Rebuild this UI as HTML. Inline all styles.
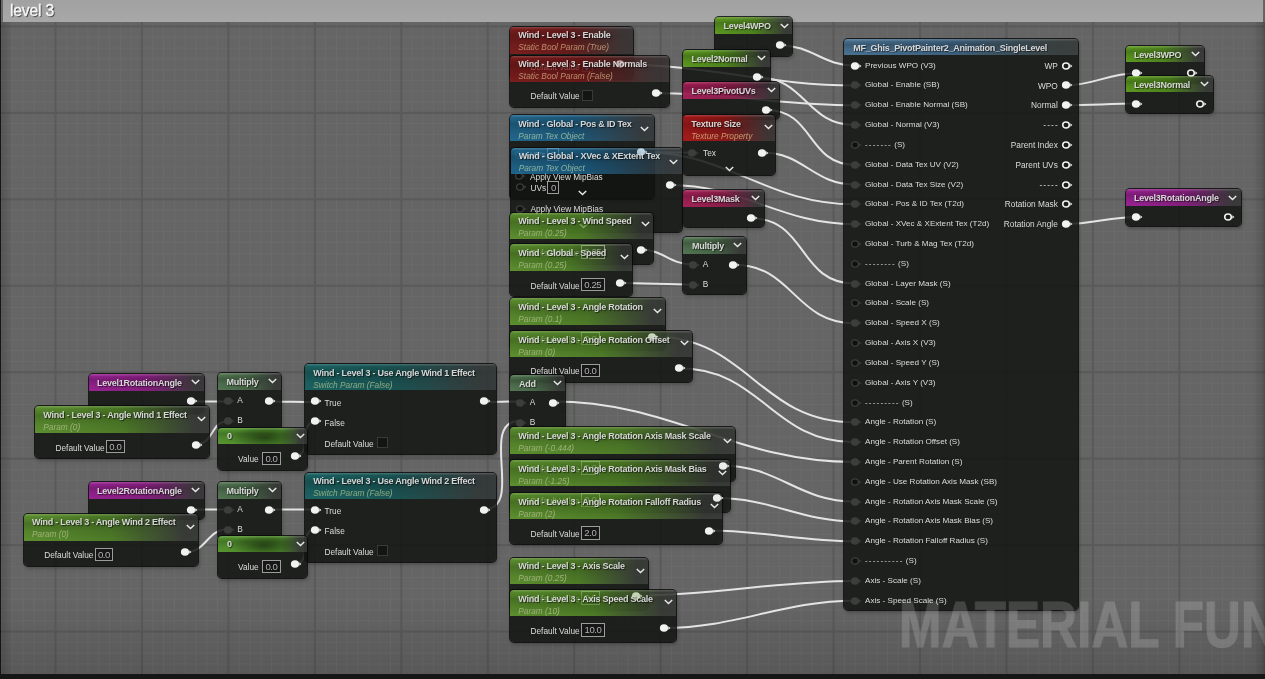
<!DOCTYPE html><html><head><meta charset="utf-8"><style>

*{margin:0;padding:0;box-sizing:border-box}
html,body{width:1265px;height:679px;overflow:hidden;background:#656565}
body{position:relative;font-family:"Liberation Sans",sans-serif}
#bg{position:absolute;left:0;top:0;width:1265px;height:679px;background:#656565}
.grid{position:absolute;left:0;top:0;width:1265px;height:679px}
#cmt{position:absolute;left:3px;top:0;width:1260px;height:22px;background:linear-gradient(180deg,#a1a1a1,#a8a8a8);z-index:2}
#cmtl{position:absolute;left:0;top:0;width:1.3px;height:679px;background:#161616;z-index:2}
#cmtt{position:absolute;left:10.3px;top:1px;font-size:17px;letter-spacing:-0.2px;color:#f6f6f6;text-shadow:1px 1px 1px rgba(20,20,20,.8);-webkit-text-stroke:0.4px #f6f6f6;z-index:3;white-space:nowrap;transform:scaleX(.925);transform-origin:0 0}
#botbar{position:absolute;left:0;top:674px;width:1265px;height:5px;background:#161616;z-index:1000}
#vl{position:absolute;left:1px;top:22px;width:12px;height:652px;background:linear-gradient(90deg,rgba(0,0,0,.16),rgba(0,0,0,0));z-index:4}
#vb{position:absolute;left:0;top:600px;width:1265px;height:74px;background:linear-gradient(180deg,rgba(0,0,0,0),rgba(0,0,0,.12));z-index:4}
#rstrip{position:absolute;left:1252px;top:22px;width:13px;height:652px;background:linear-gradient(90deg,rgba(0,0,0,0),rgba(0,0,0,.1) 70%,rgba(0,0,0,.22));z-index:950}
#wm{position:absolute;left:898.5px;top:587.3px;font-size:65px;font-weight:bold;color:#fff;opacity:.17;-webkit-text-stroke:1.2px #fff;white-space:nowrap;transform:scaleX(.787);transform-origin:0 0;z-index:900;letter-spacing:0}
#wires{position:absolute;left:0;top:0;z-index:5}
#wires path{fill:none;stroke:#e4e4e4;stroke-width:2}
.node{position:absolute;border-radius:4px;box-shadow:0 0 0 1px rgba(8,8,8,.8),1px 2px 4px rgba(0,0,0,.32)}
.nbody{position:absolute;background:rgba(18,20,18,.85);border-radius:4px}
.hdr{position:absolute;border-radius:4px 4px 0 0;overflow:hidden}
.hdr::before{content:"";position:absolute;left:0;top:0;right:0;height:2px;background:linear-gradient(180deg,rgba(255,255,255,.17),rgba(255,255,255,.03))}
.hdr::after{content:"";position:absolute;left:0;top:0;right:0;bottom:0;background:linear-gradient(180deg,rgba(0,0,0,0) 1.5px,rgba(0,0,0,.2) 35%,rgba(0,0,0,.08) 65%,rgba(0,0,0,0) 100%);-webkit-mask-image:linear-gradient(90deg,#000 55%,rgba(0,0,0,0) 100%)}
.t{position:absolute;white-space:nowrap;line-height:1}
.title{font-size:9px;font-weight:bold;letter-spacing:-0.25px;color:#d6d6d6;text-shadow:1px 1px 1px rgba(0,0,0,.6)}
.sub{font-size:8.3px;font-style:italic;color:#9fb27a}
.sub-red{color:#b98f6c}
.sub-texred{color:#c79a6e}
.sub-blue{color:#8db39e}
.sub-teal{color:#8cab80}
.lbl{font-size:8.3px;color:#dcdcdc}
.chev{position:absolute}
.pin{position:absolute}
.box{position:absolute;border:1px solid #9c9c9c;color:#b0b0b0;font-size:9.6px;letter-spacing:-0.45px;line-height:12px;text-align:center;background:rgba(14,14,14,.55)}
.cbx{position:absolute;width:11px;height:11px;background:#141414;border:1px solid #3a3a3a}

</style></head><body>
<div id="bg"></div>
<div id="scene" style="position:absolute;left:0;top:0;width:1265px;height:679px;will-change:transform">
<svg class="grid" width="1265" height="679"><rect x="0.97" y="0" width="1" height="679" fill="#6b6b6b"/><rect x="11.77" y="0" width="1" height="679" fill="#6b6b6b"/><rect x="22.58" y="0" width="1" height="679" fill="#6b6b6b"/><rect x="33.39" y="0" width="1" height="679" fill="#6b6b6b"/><rect x="44.19" y="0" width="1" height="679" fill="#6b6b6b"/><rect x="65.81" y="0" width="1" height="679" fill="#6b6b6b"/><rect x="76.61" y="0" width="1" height="679" fill="#6b6b6b"/><rect x="87.42" y="0" width="1" height="679" fill="#6b6b6b"/><rect x="98.22" y="0" width="1" height="679" fill="#6b6b6b"/><rect x="109.03" y="0" width="1" height="679" fill="#6b6b6b"/><rect x="119.84" y="0" width="1" height="679" fill="#6b6b6b"/><rect x="130.64" y="0" width="1" height="679" fill="#6b6b6b"/><rect x="152.26" y="0" width="1" height="679" fill="#6b6b6b"/><rect x="163.06" y="0" width="1" height="679" fill="#6b6b6b"/><rect x="173.87" y="0" width="1" height="679" fill="#6b6b6b"/><rect x="184.68" y="0" width="1" height="679" fill="#6b6b6b"/><rect x="195.48" y="0" width="1" height="679" fill="#6b6b6b"/><rect x="206.29" y="0" width="1" height="679" fill="#6b6b6b"/><rect x="217.09" y="0" width="1" height="679" fill="#6b6b6b"/><rect x="238.71" y="0" width="1" height="679" fill="#6b6b6b"/><rect x="249.51" y="0" width="1" height="679" fill="#6b6b6b"/><rect x="260.32" y="0" width="1" height="679" fill="#6b6b6b"/><rect x="271.12" y="0" width="1" height="679" fill="#6b6b6b"/><rect x="281.93" y="0" width="1" height="679" fill="#6b6b6b"/><rect x="292.74" y="0" width="1" height="679" fill="#6b6b6b"/><rect x="303.54" y="0" width="1" height="679" fill="#6b6b6b"/><rect x="325.16" y="0" width="1" height="679" fill="#6b6b6b"/><rect x="335.96" y="0" width="1" height="679" fill="#6b6b6b"/><rect x="346.77" y="0" width="1" height="679" fill="#6b6b6b"/><rect x="357.57" y="0" width="1" height="679" fill="#6b6b6b"/><rect x="368.38" y="0" width="1" height="679" fill="#6b6b6b"/><rect x="379.19" y="0" width="1" height="679" fill="#6b6b6b"/><rect x="389.99" y="0" width="1" height="679" fill="#6b6b6b"/><rect x="411.61" y="0" width="1" height="679" fill="#6b6b6b"/><rect x="422.41" y="0" width="1" height="679" fill="#6b6b6b"/><rect x="433.22" y="0" width="1" height="679" fill="#6b6b6b"/><rect x="444.03" y="0" width="1" height="679" fill="#6b6b6b"/><rect x="454.83" y="0" width="1" height="679" fill="#6b6b6b"/><rect x="465.64" y="0" width="1" height="679" fill="#6b6b6b"/><rect x="476.44" y="0" width="1" height="679" fill="#6b6b6b"/><rect x="498.06" y="0" width="1" height="679" fill="#6b6b6b"/><rect x="508.86" y="0" width="1" height="679" fill="#6b6b6b"/><rect x="519.67" y="0" width="1" height="679" fill="#6b6b6b"/><rect x="530.48" y="0" width="1" height="679" fill="#6b6b6b"/><rect x="541.28" y="0" width="1" height="679" fill="#6b6b6b"/><rect x="552.09" y="0" width="1" height="679" fill="#6b6b6b"/><rect x="562.89" y="0" width="1" height="679" fill="#6b6b6b"/><rect x="584.51" y="0" width="1" height="679" fill="#6b6b6b"/><rect x="595.31" y="0" width="1" height="679" fill="#6b6b6b"/><rect x="606.12" y="0" width="1" height="679" fill="#6b6b6b"/><rect x="616.93" y="0" width="1" height="679" fill="#6b6b6b"/><rect x="627.73" y="0" width="1" height="679" fill="#6b6b6b"/><rect x="638.54" y="0" width="1" height="679" fill="#6b6b6b"/><rect x="649.34" y="0" width="1" height="679" fill="#6b6b6b"/><rect x="670.96" y="0" width="1" height="679" fill="#6b6b6b"/><rect x="681.76" y="0" width="1" height="679" fill="#6b6b6b"/><rect x="692.57" y="0" width="1" height="679" fill="#6b6b6b"/><rect x="703.38" y="0" width="1" height="679" fill="#6b6b6b"/><rect x="714.18" y="0" width="1" height="679" fill="#6b6b6b"/><rect x="724.99" y="0" width="1" height="679" fill="#6b6b6b"/><rect x="735.79" y="0" width="1" height="679" fill="#6b6b6b"/><rect x="757.41" y="0" width="1" height="679" fill="#6b6b6b"/><rect x="768.21" y="0" width="1" height="679" fill="#6b6b6b"/><rect x="779.02" y="0" width="1" height="679" fill="#6b6b6b"/><rect x="789.83" y="0" width="1" height="679" fill="#6b6b6b"/><rect x="800.63" y="0" width="1" height="679" fill="#6b6b6b"/><rect x="811.44" y="0" width="1" height="679" fill="#6b6b6b"/><rect x="822.24" y="0" width="1" height="679" fill="#6b6b6b"/><rect x="843.86" y="0" width="1" height="679" fill="#6b6b6b"/><rect x="854.66" y="0" width="1" height="679" fill="#6b6b6b"/><rect x="865.47" y="0" width="1" height="679" fill="#6b6b6b"/><rect x="876.27" y="0" width="1" height="679" fill="#6b6b6b"/><rect x="887.08" y="0" width="1" height="679" fill="#6b6b6b"/><rect x="897.89" y="0" width="1" height="679" fill="#6b6b6b"/><rect x="908.69" y="0" width="1" height="679" fill="#6b6b6b"/><rect x="930.31" y="0" width="1" height="679" fill="#6b6b6b"/><rect x="941.11" y="0" width="1" height="679" fill="#6b6b6b"/><rect x="951.92" y="0" width="1" height="679" fill="#6b6b6b"/><rect x="962.73" y="0" width="1" height="679" fill="#6b6b6b"/><rect x="973.53" y="0" width="1" height="679" fill="#6b6b6b"/><rect x="984.34" y="0" width="1" height="679" fill="#6b6b6b"/><rect x="995.14" y="0" width="1" height="679" fill="#6b6b6b"/><rect x="1016.76" y="0" width="1" height="679" fill="#6b6b6b"/><rect x="1027.56" y="0" width="1" height="679" fill="#6b6b6b"/><rect x="1038.37" y="0" width="1" height="679" fill="#6b6b6b"/><rect x="1049.18" y="0" width="1" height="679" fill="#6b6b6b"/><rect x="1059.98" y="0" width="1" height="679" fill="#6b6b6b"/><rect x="1070.79" y="0" width="1" height="679" fill="#6b6b6b"/><rect x="1081.59" y="0" width="1" height="679" fill="#6b6b6b"/><rect x="1103.21" y="0" width="1" height="679" fill="#6b6b6b"/><rect x="1114.01" y="0" width="1" height="679" fill="#6b6b6b"/><rect x="1124.82" y="0" width="1" height="679" fill="#6b6b6b"/><rect x="1135.62" y="0" width="1" height="679" fill="#6b6b6b"/><rect x="1146.43" y="0" width="1" height="679" fill="#6b6b6b"/><rect x="1157.24" y="0" width="1" height="679" fill="#6b6b6b"/><rect x="1168.04" y="0" width="1" height="679" fill="#6b6b6b"/><rect x="1189.66" y="0" width="1" height="679" fill="#6b6b6b"/><rect x="1200.46" y="0" width="1" height="679" fill="#6b6b6b"/><rect x="1211.27" y="0" width="1" height="679" fill="#6b6b6b"/><rect x="1222.08" y="0" width="1" height="679" fill="#6b6b6b"/><rect x="1232.88" y="0" width="1" height="679" fill="#6b6b6b"/><rect x="1243.69" y="0" width="1" height="679" fill="#6b6b6b"/><rect x="1254.49" y="0" width="1" height="679" fill="#6b6b6b"/><rect x="0" y="4.29" width="1265" height="1" fill="#6b6b6b"/><rect x="0" y="15.09" width="1265" height="1" fill="#6b6b6b"/><rect x="0" y="36.71" width="1265" height="1" fill="#6b6b6b"/><rect x="0" y="47.51" width="1265" height="1" fill="#6b6b6b"/><rect x="0" y="58.32" width="1265" height="1" fill="#6b6b6b"/><rect x="0" y="69.12" width="1265" height="1" fill="#6b6b6b"/><rect x="0" y="79.93" width="1265" height="1" fill="#6b6b6b"/><rect x="0" y="90.74" width="1265" height="1" fill="#6b6b6b"/><rect x="0" y="101.54" width="1265" height="1" fill="#6b6b6b"/><rect x="0" y="123.16" width="1265" height="1" fill="#6b6b6b"/><rect x="0" y="133.96" width="1265" height="1" fill="#6b6b6b"/><rect x="0" y="144.77" width="1265" height="1" fill="#6b6b6b"/><rect x="0" y="155.58" width="1265" height="1" fill="#6b6b6b"/><rect x="0" y="166.38" width="1265" height="1" fill="#6b6b6b"/><rect x="0" y="177.19" width="1265" height="1" fill="#6b6b6b"/><rect x="0" y="187.99" width="1265" height="1" fill="#6b6b6b"/><rect x="0" y="209.61" width="1265" height="1" fill="#6b6b6b"/><rect x="0" y="220.41" width="1265" height="1" fill="#6b6b6b"/><rect x="0" y="231.22" width="1265" height="1" fill="#6b6b6b"/><rect x="0" y="242.03" width="1265" height="1" fill="#6b6b6b"/><rect x="0" y="252.83" width="1265" height="1" fill="#6b6b6b"/><rect x="0" y="263.64" width="1265" height="1" fill="#6b6b6b"/><rect x="0" y="274.44" width="1265" height="1" fill="#6b6b6b"/><rect x="0" y="296.06" width="1265" height="1" fill="#6b6b6b"/><rect x="0" y="306.86" width="1265" height="1" fill="#6b6b6b"/><rect x="0" y="317.67" width="1265" height="1" fill="#6b6b6b"/><rect x="0" y="328.47" width="1265" height="1" fill="#6b6b6b"/><rect x="0" y="339.28" width="1265" height="1" fill="#6b6b6b"/><rect x="0" y="350.09" width="1265" height="1" fill="#6b6b6b"/><rect x="0" y="360.89" width="1265" height="1" fill="#6b6b6b"/><rect x="0" y="382.51" width="1265" height="1" fill="#6b6b6b"/><rect x="0" y="393.31" width="1265" height="1" fill="#6b6b6b"/><rect x="0" y="404.12" width="1265" height="1" fill="#6b6b6b"/><rect x="0" y="414.93" width="1265" height="1" fill="#6b6b6b"/><rect x="0" y="425.73" width="1265" height="1" fill="#6b6b6b"/><rect x="0" y="436.54" width="1265" height="1" fill="#6b6b6b"/><rect x="0" y="447.34" width="1265" height="1" fill="#6b6b6b"/><rect x="0" y="468.96" width="1265" height="1" fill="#6b6b6b"/><rect x="0" y="479.76" width="1265" height="1" fill="#6b6b6b"/><rect x="0" y="490.57" width="1265" height="1" fill="#6b6b6b"/><rect x="0" y="501.38" width="1265" height="1" fill="#6b6b6b"/><rect x="0" y="512.18" width="1265" height="1" fill="#6b6b6b"/><rect x="0" y="522.99" width="1265" height="1" fill="#6b6b6b"/><rect x="0" y="533.79" width="1265" height="1" fill="#6b6b6b"/><rect x="0" y="555.41" width="1265" height="1" fill="#6b6b6b"/><rect x="0" y="566.21" width="1265" height="1" fill="#6b6b6b"/><rect x="0" y="577.02" width="1265" height="1" fill="#6b6b6b"/><rect x="0" y="587.83" width="1265" height="1" fill="#6b6b6b"/><rect x="0" y="598.63" width="1265" height="1" fill="#6b6b6b"/><rect x="0" y="609.44" width="1265" height="1" fill="#6b6b6b"/><rect x="0" y="620.24" width="1265" height="1" fill="#6b6b6b"/><rect x="0" y="641.86" width="1265" height="1" fill="#6b6b6b"/><rect x="0" y="652.66" width="1265" height="1" fill="#6b6b6b"/><rect x="0" y="663.47" width="1265" height="1" fill="#6b6b6b"/><rect x="0" y="674.27" width="1265" height="1" fill="#6b6b6b"/><rect x="54.5" y="0" width="2" height="679" fill="#5a5a5a"/><rect x="140.95" y="0" width="2" height="679" fill="#5a5a5a"/><rect x="227.4" y="0" width="2" height="679" fill="#5a5a5a"/><rect x="313.85" y="0" width="2" height="679" fill="#5a5a5a"/><rect x="400.3" y="0" width="2" height="679" fill="#5a5a5a"/><rect x="486.75" y="0" width="2" height="679" fill="#5a5a5a"/><rect x="573.2" y="0" width="2" height="679" fill="#5a5a5a"/><rect x="659.65" y="0" width="2" height="679" fill="#5a5a5a"/><rect x="746.1" y="0" width="2" height="679" fill="#5a5a5a"/><rect x="832.55" y="0" width="2" height="679" fill="#5a5a5a"/><rect x="919" y="0" width="2" height="679" fill="#5a5a5a"/><rect x="1005.45" y="0" width="2" height="679" fill="#5a5a5a"/><rect x="1091.9" y="0" width="2" height="679" fill="#5a5a5a"/><rect x="1178.35" y="0" width="2" height="679" fill="#5a5a5a"/><rect x="1264.8" y="0" width="2" height="679" fill="#5a5a5a"/><rect x="0" y="25.4" width="1265" height="2" fill="#5a5a5a"/><rect x="0" y="111.85" width="1265" height="2" fill="#5a5a5a"/><rect x="0" y="198.3" width="1265" height="2" fill="#5a5a5a"/><rect x="0" y="284.75" width="1265" height="2" fill="#5a5a5a"/><rect x="0" y="371.2" width="1265" height="2" fill="#5a5a5a"/><rect x="0" y="457.65" width="1265" height="2" fill="#5a5a5a"/><rect x="0" y="544.1" width="1265" height="2" fill="#5a5a5a"/><rect x="0" y="630.55" width="1265" height="2" fill="#5a5a5a"/></svg>
<div id="cmt"></div><div id="cmtl"></div><div id="cmtt">level 3</div>
<div id="wm">MATERIAL FUNCTION</div>
<svg id="wires" width="1265" height="679"><path d="M190.7 401.5 C203.27 401.5 215.83 401.5 228.4 401.5"/><path d="M195.9 444.2 C214.4 444.2 209.9 421.2 228.4 421.2"/><path d="M268.6 401.5 C284.33 401.5 299.57 402 315.3 402"/><path d="M295.3 455.6 C313.17 455.6 297.43 422 315.3 422"/><path d="M190.5 509.5 C203.13 509.5 215.77 509.5 228.4 509.5"/><path d="M185 552.2 C207.13 552.2 206.27 529.2 228.4 529.2"/><path d="M268.6 509.5 C284.2 509.5 299.7 509.6 315.3 509.6"/><path d="M295.3 563.6 C313.3 563.6 297.3 529.6 315.3 529.6"/><path d="M483.7 402 C495.8 402 507.4 401.5 519.5 401.5"/><path d="M483.7 509.6 C525.17 509.6 478.03 421 519.5 421"/><path d="M552.5 401.5 C673.37 401.5 733.73 462 854.6 462"/><path d="M780.5 45.4 C811.93 45.4 823.17 65.6 854.6 65.6"/><path d="M620 64.5 C705.17 64.5 769.43 85.42 854.6 85.42"/><path d="M656 93.3 C726.18 93.3 784.42 105.24 854.6 105.24"/><path d="M757.3 77.4 C805.62 77.4 806.28 125.06 854.6 125.06"/><path d="M766.6 110 C814.17 110 807.03 164.7 854.6 164.7"/><path d="M762.3 152.5 C803.74 152.5 813.16 184.52 854.6 184.52"/><path d="M641 152 C658.3 152 675.1 152.5 692.4 152.5"/><path d="M641 152 C729.65 152 765.95 204.34 854.6 204.34"/><path d="M669.7 185 C744.39 185 779.91 224.16 854.6 224.16"/><path d="M751 218.3 C807.31 218.3 798.29 283.62 854.6 283.62"/><path d="M733 264.5 C793.12 264.5 794.48 323.26 854.6 323.26"/><path d="M641 249.6 C663.1 249.6 670.3 264.5 692.4 264.5"/><path d="M620 283 C644.63 283 667.77 284.5 692.4 284.5"/><path d="M652.5 336.5 C748.49 336.5 758.61 422.36 854.6 422.36"/><path d="M678.8 368.3 C762.03 368.3 771.37 442.18 854.6 442.18"/><path d="M722 465.4 C778.28 465.4 798.32 501.64 854.6 501.64"/><path d="M717 498 C770.69 498 800.91 521.46 854.6 521.46"/><path d="M709 530.6 C761.09 530.6 802.51 541.28 854.6 541.28"/><path d="M636 595.5 C713.73 595.5 776.87 580.92 854.6 580.92"/><path d="M664 628 C736.62 628 781.98 600.74 854.6 600.74"/><path d="M1065.6 85.42 C1093.11 85.42 1108.49 73.3 1136 73.3"/><path d="M1065.6 105.24 C1089.61 105.24 1111.99 103.6 1136 103.6"/><path d="M1065.6 224.16 C1091.45 224.16 1110.15 217 1136 217"/></svg>
<div class="node" style="left:88.5px;top:374.1px;width:115.4px;height:38.7px;z-index:101"></div><div class="nbody" style="left:88.5px;top:374.1px;width:115.4px;height:38.7px;z-index:101"></div><div class="hdr" style="left:88.5px;top:374.1px;width:115.4px;height:16.9px;background:linear-gradient(90deg,rgba(202,37,194,0.72) 0%,rgba(181,32,171,0.68) 52%,rgba(224,200,224,0.15) 92%,rgba(224,200,224,0.15) 100%);z-index:301"></div><div class="t title" style="left:96.9px;top:379.18px;z-index:501">Level1RotationAngle</div><svg class="chev" style="left:191.4px;top:379.3px;z-index:501" width="9" height="6"><path d="M0.8 1 L4.5 4.5 L8.2 1" fill="none" stroke="#e8e8e8" stroke-width="1.45"/></svg><svg class="pin" style="left:186.2px;top:396.4px;z-index:201" width="14" height="10"><ellipse cx="5" cy="5" rx="4.10" ry="3.80" fill="#f2f2f2" stroke="none" stroke-width="0"/><path d="M9.3 3.3 L11.4 5 L9.3 6.7 Z" fill="#f2f2f2"/></svg><div class="node" style="left:35.1px;top:406.1px;width:173.7px;height:52.2px;z-index:102"></div><div class="nbody" style="left:35.1px;top:406.1px;width:173.7px;height:52.2px;z-index:102"></div><div class="hdr" style="left:35.1px;top:406.1px;width:173.7px;height:26.9px;background:linear-gradient(90deg,rgba(117,187,55,0.72) 0%,rgba(102,168,46,0.68) 50%,rgba(211,220,204,0.15) 92%,rgba(211,220,204,0.15) 100%);z-index:302"></div><div class="t title" style="left:43.3px;top:410.58px;z-index:502">Wind - Level 3 - Angle Wind 1 Effect</div><div class="t sub sub-green" style="left:43.3px;top:422.53px;z-index:502">Param (0)</div><svg class="chev" style="left:196.8px;top:416px;z-index:502" width="9" height="6"><path d="M0.8 1 L4.5 4.5 L8.2 1" fill="none" stroke="#e8e8e8" stroke-width="1.45"/></svg><div class="t lbl" style="left:55.5px;top:443.53px;z-index:202">Default Value</div><div class="box" style="left:106px;top:439.9px;width:18.6px;height:13.6px;z-index:202">0.0</div><svg class="pin" style="left:191.1px;top:439.5px;z-index:202" width="14" height="10"><ellipse cx="5" cy="5" rx="4.10" ry="3.80" fill="#f2f2f2" stroke="none" stroke-width="0"/><path d="M9.3 3.3 L11.4 5 L9.3 6.7 Z" fill="#f2f2f2"/></svg><div class="node" style="left:217.6px;top:373.1px;width:63.3px;height:57.2px;z-index:103"></div><div class="nbody" style="left:217.6px;top:373.1px;width:63.3px;height:57.2px;z-index:103"></div><div class="hdr" style="left:217.6px;top:373.1px;width:63.3px;height:16.9px;background:linear-gradient(90deg,rgba(106,152,106,0.72) 0%,rgba(94,140,94,0.68) 45%,rgba(211,220,211,0.15) 92%,rgba(211,220,211,0.15) 100%);z-index:303"></div><div class="t title" style="left:226.5px;top:378.18px;z-index:503">Multiply</div><svg class="chev" style="left:268.3px;top:378.2px;z-index:503" width="9" height="6"><path d="M0.8 1 L4.5 4.5 L8.2 1" fill="none" stroke="#e8e8e8" stroke-width="1.45"/></svg><svg class="pin" style="left:222.5px;top:396px;z-index:203" width="14" height="10"><ellipse cx="5" cy="5" rx="4.10" ry="3.80" fill="#3c3d3c" stroke="none" stroke-width="0"/><path d="M9.3 3.3 L11.4 5 L9.3 6.7 Z" fill="#3c3d3c"/></svg><svg class="pin" style="left:222.5px;top:416px;z-index:203" width="14" height="10"><ellipse cx="5" cy="5" rx="4.10" ry="3.80" fill="#3c3d3c" stroke="none" stroke-width="0"/><path d="M9.3 3.3 L11.4 5 L9.3 6.7 Z" fill="#3c3d3c"/></svg><div class="t lbl" style="left:237.3px;top:396.23px;z-index:203">A</div><div class="t lbl" style="left:237.3px;top:416.23px;z-index:203">B</div><svg class="pin" style="left:263.6px;top:396px;z-index:203" width="14" height="10"><ellipse cx="5" cy="5" rx="4.10" ry="3.80" fill="#f2f2f2" stroke="none" stroke-width="0"/><path d="M9.3 3.3 L11.4 5 L9.3 6.7 Z" fill="#f2f2f2"/></svg><div class="node" style="left:305.1px;top:364.4px;width:191.2px;height:89.7px;z-index:104"></div><div class="nbody" style="left:305.1px;top:364.4px;width:191.2px;height:89.7px;z-index:104"></div><div class="hdr" style="left:305.1px;top:364.4px;width:191.2px;height:25.9px;background:linear-gradient(90deg,rgba(28,126,127,0.72) 0%,rgba(25,111,112,0.68) 45%,rgba(198,220,231,0.15) 92%,rgba(198,220,231,0.15) 100%);z-index:304"></div><div class="t title" style="left:313.3px;top:368.88px;z-index:504">Wind - Level 3 - Use Angle Wind 1 Effect</div><div class="t sub sub-teal" style="left:313.3px;top:380.83px;z-index:504">Switch Param (False)</div><svg class="pin" style="left:310.3px;top:396.3px;z-index:204" width="14" height="10"><ellipse cx="5" cy="5" rx="4.10" ry="3.80" fill="#f2f2f2" stroke="none" stroke-width="0"/><path d="M9.3 3.3 L11.4 5 L9.3 6.7 Z" fill="#f2f2f2"/></svg><svg class="pin" style="left:310.3px;top:416.3px;z-index:204" width="14" height="10"><ellipse cx="5" cy="5" rx="4.10" ry="3.80" fill="#f2f2f2" stroke="none" stroke-width="0"/><path d="M9.3 3.3 L11.4 5 L9.3 6.7 Z" fill="#f2f2f2"/></svg><div class="t lbl" style="left:324.5px;top:398.83px;z-index:204">True</div><div class="t lbl" style="left:324.5px;top:418.93px;z-index:204">False</div><div class="t lbl" style="left:324.5px;top:439.83px;z-index:204">Default Value</div><div class="cbx" style="left:376.5px;top:436.9px;z-index:204"></div><svg class="pin" style="left:478.7px;top:396.3px;z-index:204" width="14" height="10"><ellipse cx="5" cy="5" rx="4.10" ry="3.80" fill="#f2f2f2" stroke="none" stroke-width="0"/><path d="M9.3 3.3 L11.4 5 L9.3 6.7 Z" fill="#f2f2f2"/></svg><div class="node" style="left:218.1px;top:428.3px;width:89.2px;height:42.2px;z-index:105"></div><div class="nbody" style="left:218.1px;top:428.3px;width:89.2px;height:42.2px;z-index:105"></div><div class="hdr" style="left:218.1px;top:428.3px;width:89.2px;height:15.9px;background:radial-gradient(ellipse 38% 70% at 52% 60%,rgba(0,0,0,.45),rgba(0,0,0,0)),linear-gradient(90deg,rgba(109,196,57,0.72) 0%,rgba(100,187,50,0.68) 70%,rgba(211,233,204,0.15) 92%,rgba(211,233,204,0.15) 100%);z-index:305"></div><div class="t title" style="left:227px;top:431.88px;z-index:505">0</div><svg class="chev" style="left:295.5px;top:432.7px;z-index:505" width="9" height="6"><path d="M0.8 1 L4.5 4.5 L8.2 1" fill="none" stroke="#e8e8e8" stroke-width="1.45"/></svg><div class="t lbl" style="left:238px;top:454.93px;z-index:205">Value</div><div class="box" style="left:262px;top:451.6px;width:18.8px;height:13.3px;z-index:205">0.0</div><svg class="pin" style="left:290.3px;top:450.6px;z-index:205" width="14" height="10"><ellipse cx="5" cy="5" rx="4.10" ry="3.80" fill="#f2f2f2" stroke="none" stroke-width="0"/><path d="M9.3 3.3 L11.4 5 L9.3 6.7 Z" fill="#f2f2f2"/></svg><div class="node" style="left:88.6px;top:481.7px;width:115.1px;height:37.7px;z-index:106"></div><div class="nbody" style="left:88.6px;top:481.7px;width:115.1px;height:37.7px;z-index:106"></div><div class="hdr" style="left:88.6px;top:481.7px;width:115.1px;height:16.9px;background:linear-gradient(90deg,rgba(202,37,194,0.72) 0%,rgba(181,32,171,0.68) 52%,rgba(224,200,224,0.15) 92%,rgba(224,200,224,0.15) 100%);z-index:306"></div><div class="t title" style="left:97px;top:486.78px;z-index:506">Level2RotationAngle</div><svg class="chev" style="left:191.2px;top:486.9px;z-index:506" width="9" height="6"><path d="M0.8 1 L4.5 4.5 L8.2 1" fill="none" stroke="#e8e8e8" stroke-width="1.45"/></svg><svg class="pin" style="left:186px;top:504.5px;z-index:206" width="14" height="10"><ellipse cx="5" cy="5" rx="4.10" ry="3.80" fill="#f2f2f2" stroke="none" stroke-width="0"/><path d="M9.3 3.3 L11.4 5 L9.3 6.7 Z" fill="#f2f2f2"/></svg><div class="node" style="left:23.8px;top:513.8px;width:173.9px;height:52.2px;z-index:107"></div><div class="nbody" style="left:23.8px;top:513.8px;width:173.9px;height:52.2px;z-index:107"></div><div class="hdr" style="left:23.8px;top:513.8px;width:173.9px;height:26.9px;background:linear-gradient(90deg,rgba(117,187,55,0.72) 0%,rgba(102,168,46,0.68) 50%,rgba(211,220,204,0.15) 92%,rgba(211,220,204,0.15) 100%);z-index:307"></div><div class="t title" style="left:32px;top:518.28px;z-index:507">Wind - Level 3 - Angle Wind 2 Effect</div><div class="t sub sub-green" style="left:32px;top:530.23px;z-index:507">Param (0)</div><svg class="chev" style="left:185.7px;top:523.7px;z-index:507" width="9" height="6"><path d="M0.8 1 L4.5 4.5 L8.2 1" fill="none" stroke="#e8e8e8" stroke-width="1.45"/></svg><div class="t lbl" style="left:44.2px;top:551.23px;z-index:207">Default Value</div><div class="box" style="left:94.7px;top:547.6px;width:18.6px;height:13.6px;z-index:207">0.0</div><svg class="pin" style="left:180px;top:547.2px;z-index:207" width="14" height="10"><ellipse cx="5" cy="5" rx="4.10" ry="3.80" fill="#f2f2f2" stroke="none" stroke-width="0"/><path d="M9.3 3.3 L11.4 5 L9.3 6.7 Z" fill="#f2f2f2"/></svg><div class="node" style="left:217.6px;top:482.1px;width:63.3px;height:57.2px;z-index:108"></div><div class="nbody" style="left:217.6px;top:482.1px;width:63.3px;height:57.2px;z-index:108"></div><div class="hdr" style="left:217.6px;top:482.1px;width:63.3px;height:16.9px;background:linear-gradient(90deg,rgba(106,152,106,0.72) 0%,rgba(94,140,94,0.68) 45%,rgba(211,220,211,0.15) 92%,rgba(211,220,211,0.15) 100%);z-index:308"></div><div class="t title" style="left:226.5px;top:487.18px;z-index:508">Multiply</div><svg class="chev" style="left:268.3px;top:487.2px;z-index:508" width="9" height="6"><path d="M0.8 1 L4.5 4.5 L8.2 1" fill="none" stroke="#e8e8e8" stroke-width="1.45"/></svg><svg class="pin" style="left:222.5px;top:505px;z-index:208" width="14" height="10"><ellipse cx="5" cy="5" rx="4.10" ry="3.80" fill="#3c3d3c" stroke="none" stroke-width="0"/><path d="M9.3 3.3 L11.4 5 L9.3 6.7 Z" fill="#3c3d3c"/></svg><svg class="pin" style="left:222.5px;top:525px;z-index:208" width="14" height="10"><ellipse cx="5" cy="5" rx="4.10" ry="3.80" fill="#3c3d3c" stroke="none" stroke-width="0"/><path d="M9.3 3.3 L11.4 5 L9.3 6.7 Z" fill="#3c3d3c"/></svg><div class="t lbl" style="left:237.3px;top:505.23px;z-index:208">A</div><div class="t lbl" style="left:237.3px;top:525.23px;z-index:208">B</div><svg class="pin" style="left:263.6px;top:505px;z-index:208" width="14" height="10"><ellipse cx="5" cy="5" rx="4.10" ry="3.80" fill="#f2f2f2" stroke="none" stroke-width="0"/><path d="M9.3 3.3 L11.4 5 L9.3 6.7 Z" fill="#f2f2f2"/></svg><div class="node" style="left:305.1px;top:472.7px;width:191.2px;height:89.7px;z-index:109"></div><div class="nbody" style="left:305.1px;top:472.7px;width:191.2px;height:89.7px;z-index:109"></div><div class="hdr" style="left:305.1px;top:472.7px;width:191.2px;height:25.9px;background:linear-gradient(90deg,rgba(28,126,127,0.72) 0%,rgba(25,111,112,0.68) 45%,rgba(198,220,231,0.15) 92%,rgba(198,220,231,0.15) 100%);z-index:309"></div><div class="t title" style="left:313.3px;top:477.18px;z-index:509">Wind - Level 3 - Use Angle Wind 2 Effect</div><div class="t sub sub-teal" style="left:313.3px;top:489.13px;z-index:509">Switch Param (False)</div><svg class="pin" style="left:310.3px;top:504.6px;z-index:209" width="14" height="10"><ellipse cx="5" cy="5" rx="4.10" ry="3.80" fill="#f2f2f2" stroke="none" stroke-width="0"/><path d="M9.3 3.3 L11.4 5 L9.3 6.7 Z" fill="#f2f2f2"/></svg><svg class="pin" style="left:310.3px;top:524.6px;z-index:209" width="14" height="10"><ellipse cx="5" cy="5" rx="4.10" ry="3.80" fill="#f2f2f2" stroke="none" stroke-width="0"/><path d="M9.3 3.3 L11.4 5 L9.3 6.7 Z" fill="#f2f2f2"/></svg><div class="t lbl" style="left:324.5px;top:507.13px;z-index:209">True</div><div class="t lbl" style="left:324.5px;top:527.23px;z-index:209">False</div><div class="t lbl" style="left:324.5px;top:548.13px;z-index:209">Default Value</div><div class="cbx" style="left:376.5px;top:545.2px;z-index:209"></div><svg class="pin" style="left:478.7px;top:504.6px;z-index:209" width="14" height="10"><ellipse cx="5" cy="5" rx="4.10" ry="3.80" fill="#f2f2f2" stroke="none" stroke-width="0"/><path d="M9.3 3.3 L11.4 5 L9.3 6.7 Z" fill="#f2f2f2"/></svg><div class="node" style="left:218.1px;top:536.3px;width:89.2px;height:42.2px;z-index:110"></div><div class="nbody" style="left:218.1px;top:536.3px;width:89.2px;height:42.2px;z-index:110"></div><div class="hdr" style="left:218.1px;top:536.3px;width:89.2px;height:15.9px;background:radial-gradient(ellipse 38% 70% at 52% 60%,rgba(0,0,0,.45),rgba(0,0,0,0)),linear-gradient(90deg,rgba(109,196,57,0.72) 0%,rgba(100,187,50,0.68) 70%,rgba(211,233,204,0.15) 92%,rgba(211,233,204,0.15) 100%);z-index:310"></div><div class="t title" style="left:227px;top:539.88px;z-index:510">0</div><svg class="chev" style="left:295.5px;top:540.7px;z-index:510" width="9" height="6"><path d="M0.8 1 L4.5 4.5 L8.2 1" fill="none" stroke="#e8e8e8" stroke-width="1.45"/></svg><div class="t lbl" style="left:238px;top:562.93px;z-index:210">Value</div><div class="box" style="left:262px;top:559.6px;width:18.8px;height:13.3px;z-index:210">0.0</div><svg class="pin" style="left:290.3px;top:558.6px;z-index:210" width="14" height="10"><ellipse cx="5" cy="5" rx="4.10" ry="3.80" fill="#f2f2f2" stroke="none" stroke-width="0"/><path d="M9.3 3.3 L11.4 5 L9.3 6.7 Z" fill="#f2f2f2"/></svg><div class="node" style="left:510.1px;top:26.7px;width:122.5px;height:52.2px;z-index:111"></div><div class="nbody" style="left:510.1px;top:26.7px;width:122.5px;height:52.2px;z-index:111"></div><div class="hdr" style="left:510.1px;top:26.7px;width:122.5px;height:26.9px;background:linear-gradient(90deg,rgba(160,32,32,0.72) 0%,rgba(141,26,27,0.68) 45%,rgba(238,186,198,0.15) 92%,rgba(238,186,198,0.15) 100%);z-index:311"></div><div class="t title" style="left:518.3px;top:31.18px;z-index:511">Wind - Level 3 - Enable</div><div class="t sub sub-red" style="left:518.3px;top:43.13px;z-index:511">Static Bool Param (True)</div><div class="t lbl" style="left:530.5px;top:63.43px;z-index:211">Default Value</div><div class="cbx" style="left:581.5px;top:60.6px;z-index:211"></div><svg style="position:absolute;left:581.5px;top:60.6px;z-index:211" width="11" height="11"><path d="M2.5 5.5 L4.8 8 L8.8 3" fill="none" stroke="#2f8fe8" stroke-width="1.6"/></svg><svg class="pin" style="left:614.9px;top:59.4px;z-index:211" width="14" height="10"><ellipse cx="5" cy="5" rx="4.10" ry="3.80" fill="#f2f2f2" stroke="none" stroke-width="0"/><path d="M9.3 3.3 L11.4 5 L9.3 6.7 Z" fill="#f2f2f2"/></svg><div class="node" style="left:510.1px;top:55.9px;width:158.6px;height:50.7px;z-index:112"></div><div class="nbody" style="left:510.1px;top:55.9px;width:158.6px;height:50.7px;z-index:112"></div><div class="hdr" style="left:510.1px;top:55.9px;width:158.6px;height:25.9px;background:linear-gradient(90deg,rgba(160,32,32,0.72) 0%,rgba(141,26,27,0.68) 45%,rgba(238,186,198,0.15) 92%,rgba(238,186,198,0.15) 100%);z-index:312"></div><div class="t title" style="left:518.3px;top:60.38px;z-index:512">Wind - Level 3 - Enable Normals</div><div class="t sub sub-red" style="left:518.3px;top:72.33px;z-index:512">Static Bool Param (False)</div><div class="t lbl" style="left:530.5px;top:92.33px;z-index:212">Default Value</div><div class="cbx" style="left:581.5px;top:89.5px;z-index:212"></div><svg class="pin" style="left:651px;top:88.3px;z-index:212" width="14" height="10"><ellipse cx="5" cy="5" rx="4.10" ry="3.80" fill="#f2f2f2" stroke="none" stroke-width="0"/><path d="M9.3 3.3 L11.4 5 L9.3 6.7 Z" fill="#f2f2f2"/></svg><div class="node" style="left:510.1px;top:115.1px;width:143.6px;height:84.2px;z-index:113"></div><div class="nbody" style="left:510.1px;top:115.1px;width:143.6px;height:84.2px;z-index:113"></div><div class="hdr" style="left:510.1px;top:115.1px;width:143.6px;height:26.4px;background:linear-gradient(90deg,rgba(37,132,185,0.72) 0%,rgba(31,117,168,0.68) 45%,rgba(198,220,251,0.15) 92%,rgba(198,220,251,0.15) 100%);z-index:313"></div><div class="t title" style="left:518.3px;top:119.58px;z-index:513">Wind - Global - Pos &amp; ID Tex</div><div class="t sub sub-blue" style="left:518.3px;top:131.53px;z-index:513">Param Tex Object</div><svg class="chev" style="left:640.4px;top:126px;z-index:513" width="9" height="6"><path d="M0.8 1 L4.5 4.5 L8.2 1" fill="none" stroke="#e8e8e8" stroke-width="1.45"/></svg><svg class="pin" style="left:636.4px;top:147.3px;z-index:213" width="14" height="10"><ellipse cx="5" cy="5" rx="4.10" ry="3.80" fill="#f2f2f2" stroke="none" stroke-width="0"/><path d="M9.3 3.3 L11.4 5 L9.3 6.7 Z" fill="#f2f2f2"/></svg><svg class="pin" style="left:514.4px;top:149.5px;z-index:213" width="14" height="10"><ellipse cx="5" cy="5" rx="3.40" ry="3.10" fill="#101010" stroke="#3c3c3c" stroke-width="1.4"/><path d="M9.3 3.3 L11.4 5 L9.3 6.7 Z" fill="#3c3c3c"/></svg><svg class="pin" style="left:514.4px;top:171.4px;z-index:213" width="14" height="10"><ellipse cx="5" cy="5" rx="3.40" ry="3.10" fill="#101010" stroke="#3c3c3c" stroke-width="1.4"/><path d="M9.3 3.3 L11.4 5 L9.3 6.7 Z" fill="#3c3c3c"/></svg><div class="t lbl" style="left:530px;top:150.83px;z-index:213">UVs</div><div class="box" style="left:547px;top:147.9px;width:12px;height:13.6px;z-index:213">0</div><div class="t lbl" style="left:530px;top:172.63px;z-index:213">Apply View MipBias</div><svg class="chev" style="left:578.1px;top:190.3px;z-index:213" width="9" height="6"><path d="M0.8 1 L4.5 4.5 L8.2 1" fill="none" stroke="#e8e8e8" stroke-width="1.45"/></svg><div class="node" style="left:510.5px;top:147.8px;width:171.6px;height:84.2px;z-index:114"></div><div class="nbody" style="left:510.5px;top:147.8px;width:171.6px;height:84.2px;z-index:114"></div><div class="hdr" style="left:510.5px;top:147.8px;width:171.6px;height:26.4px;background:linear-gradient(90deg,rgba(37,132,185,0.72) 0%,rgba(31,117,168,0.68) 45%,rgba(198,220,251,0.15) 92%,rgba(198,220,251,0.15) 100%);z-index:314"></div><div class="t title" style="left:518.7px;top:152.28px;z-index:514">Wind - Global - XVec &amp; XExtent Tex</div><div class="t sub sub-blue" style="left:518.7px;top:164.23px;z-index:514">Param Tex Object</div><svg class="chev" style="left:668.8px;top:158.7px;z-index:514" width="9" height="6"><path d="M0.8 1 L4.5 4.5 L8.2 1" fill="none" stroke="#e8e8e8" stroke-width="1.45"/></svg><svg class="pin" style="left:664.8px;top:180px;z-index:214" width="14" height="10"><ellipse cx="5" cy="5" rx="4.10" ry="3.80" fill="#f2f2f2" stroke="none" stroke-width="0"/><path d="M9.3 3.3 L11.4 5 L9.3 6.7 Z" fill="#f2f2f2"/></svg><svg class="pin" style="left:514.8px;top:182.2px;z-index:214" width="14" height="10"><ellipse cx="5" cy="5" rx="3.40" ry="3.10" fill="#101010" stroke="#3c3c3c" stroke-width="1.4"/><path d="M9.3 3.3 L11.4 5 L9.3 6.7 Z" fill="#3c3c3c"/></svg><svg class="pin" style="left:514.8px;top:204.1px;z-index:214" width="14" height="10"><ellipse cx="5" cy="5" rx="3.40" ry="3.10" fill="#101010" stroke="#3c3c3c" stroke-width="1.4"/><path d="M9.3 3.3 L11.4 5 L9.3 6.7 Z" fill="#3c3c3c"/></svg><div class="t lbl" style="left:530.4px;top:183.53px;z-index:214">UVs</div><div class="box" style="left:547.4px;top:180.6px;width:12px;height:13.6px;z-index:214">0</div><div class="t lbl" style="left:530.4px;top:205.33px;z-index:214">Apply View MipBias</div><svg class="chev" style="left:578.5px;top:223px;z-index:214" width="9" height="6"><path d="M0.8 1 L4.5 4.5 L8.2 1" fill="none" stroke="#e8e8e8" stroke-width="1.45"/></svg><div class="node" style="left:510.1px;top:212.5px;width:143.2px;height:51.2px;z-index:115"></div><div class="nbody" style="left:510.1px;top:212.5px;width:143.2px;height:51.2px;z-index:115"></div><div class="hdr" style="left:510.1px;top:212.5px;width:143.2px;height:26.9px;background:linear-gradient(90deg,rgba(117,187,55,0.72) 0%,rgba(102,168,46,0.68) 50%,rgba(211,220,204,0.15) 92%,rgba(211,220,204,0.15) 100%);z-index:315"></div><div class="t title" style="left:518.3px;top:216.98px;z-index:515">Wind - Level 3 - Wind Speed</div><div class="t sub sub-green" style="left:518.3px;top:228.93px;z-index:515">Param (0.25)</div><svg class="chev" style="left:641.3px;top:221.4px;z-index:515" width="9" height="6"><path d="M0.8 1 L4.5 4.5 L8.2 1" fill="none" stroke="#e8e8e8" stroke-width="1.45"/></svg><div class="t lbl" style="left:530.5px;top:248.63px;z-index:215">Default Value</div><div class="box" style="left:581px;top:245px;width:23.6px;height:13.6px;z-index:215">0.25</div><svg class="pin" style="left:635.6px;top:244.6px;z-index:215" width="14" height="10"><ellipse cx="5" cy="5" rx="4.10" ry="3.80" fill="#f2f2f2" stroke="none" stroke-width="0"/><path d="M9.3 3.3 L11.4 5 L9.3 6.7 Z" fill="#f2f2f2"/></svg><div class="node" style="left:510.1px;top:244.1px;width:122.2px;height:52.2px;z-index:116"></div><div class="nbody" style="left:510.1px;top:244.1px;width:122.2px;height:52.2px;z-index:116"></div><div class="hdr" style="left:510.1px;top:244.1px;width:122.2px;height:26.9px;background:linear-gradient(90deg,rgba(117,187,55,0.72) 0%,rgba(102,168,46,0.68) 50%,rgba(211,220,204,0.15) 92%,rgba(211,220,204,0.15) 100%);z-index:316"></div><div class="t title" style="left:518.3px;top:248.58px;z-index:516">Wind - Global - Speed</div><div class="t sub sub-green" style="left:518.3px;top:260.53px;z-index:516">Param (0.25)</div><svg class="chev" style="left:620.3px;top:253.5px;z-index:516" width="9" height="6"><path d="M0.8 1 L4.5 4.5 L8.2 1" fill="none" stroke="#e8e8e8" stroke-width="1.45"/></svg><div class="t lbl" style="left:530.5px;top:281.53px;z-index:216">Default Value</div><div class="box" style="left:581px;top:277.9px;width:23.6px;height:13.6px;z-index:216">0.25</div><svg class="pin" style="left:614.6px;top:277.5px;z-index:216" width="14" height="10"><ellipse cx="5" cy="5" rx="4.10" ry="3.80" fill="#f2f2f2" stroke="none" stroke-width="0"/><path d="M9.3 3.3 L11.4 5 L9.3 6.7 Z" fill="#f2f2f2"/></svg><div class="node" style="left:510.1px;top:298.1px;width:154.7px;height:52.2px;z-index:117"></div><div class="nbody" style="left:510.1px;top:298.1px;width:154.7px;height:52.2px;z-index:117"></div><div class="hdr" style="left:510.1px;top:298.1px;width:154.7px;height:26.9px;background:linear-gradient(90deg,rgba(117,187,55,0.72) 0%,rgba(102,168,46,0.68) 50%,rgba(211,220,204,0.15) 92%,rgba(211,220,204,0.15) 100%);z-index:317"></div><div class="t title" style="left:518.3px;top:302.58px;z-index:517">Wind - Level 3 - Angle Rotation</div><div class="t sub sub-green" style="left:518.3px;top:314.53px;z-index:517">Param (0.1)</div><svg class="chev" style="left:652.8px;top:307.8px;z-index:517" width="9" height="6"><path d="M0.8 1 L4.5 4.5 L8.2 1" fill="none" stroke="#e8e8e8" stroke-width="1.45"/></svg><div class="t lbl" style="left:530.5px;top:335.53px;z-index:217">Default Value</div><div class="box" style="left:581px;top:331.9px;width:18.6px;height:13.6px;z-index:217">0.0</div><svg class="pin" style="left:647.1px;top:331.5px;z-index:217" width="14" height="10"><ellipse cx="5" cy="5" rx="4.10" ry="3.80" fill="#f2f2f2" stroke="none" stroke-width="0"/><path d="M9.3 3.3 L11.4 5 L9.3 6.7 Z" fill="#f2f2f2"/></svg><div class="node" style="left:510.1px;top:331.1px;width:181.7px;height:51.2px;z-index:118"></div><div class="nbody" style="left:510.1px;top:331.1px;width:181.7px;height:51.2px;z-index:118"></div><div class="hdr" style="left:510.1px;top:331.1px;width:181.7px;height:25.9px;background:linear-gradient(90deg,rgba(117,187,55,0.72) 0%,rgba(102,168,46,0.68) 50%,rgba(211,220,204,0.15) 92%,rgba(211,220,204,0.15) 100%);z-index:318"></div><div class="t title" style="left:518.3px;top:335.58px;z-index:518">Wind - Level 3 - Angle Rotation Offset</div><div class="t sub sub-green" style="left:518.3px;top:347.53px;z-index:518">Param (0)</div><svg class="chev" style="left:679.8px;top:340.3px;z-index:518" width="9" height="6"><path d="M0.8 1 L4.5 4.5 L8.2 1" fill="none" stroke="#e8e8e8" stroke-width="1.45"/></svg><div class="t lbl" style="left:530.5px;top:367.33px;z-index:218">Default Value</div><div class="box" style="left:581px;top:363.7px;width:18.6px;height:13.6px;z-index:218">0.0</div><svg class="pin" style="left:674.1px;top:363.3px;z-index:218" width="14" height="10"><ellipse cx="5" cy="5" rx="4.10" ry="3.80" fill="#f2f2f2" stroke="none" stroke-width="0"/><path d="M9.3 3.3 L11.4 5 L9.3 6.7 Z" fill="#f2f2f2"/></svg><div class="node" style="left:510.1px;top:374.6px;width:55.2px;height:57.2px;z-index:119"></div><div class="nbody" style="left:510.1px;top:374.6px;width:55.2px;height:57.2px;z-index:119"></div><div class="hdr" style="left:510.1px;top:374.6px;width:55.2px;height:16.9px;background:linear-gradient(90deg,rgba(106,152,106,0.72) 0%,rgba(94,140,94,0.68) 45%,rgba(211,220,211,0.15) 92%,rgba(211,220,211,0.15) 100%);z-index:319"></div><div class="t title" style="left:519px;top:379.68px;z-index:519">Add</div><svg class="chev" style="left:552.7px;top:379.7px;z-index:519" width="9" height="6"><path d="M0.8 1 L4.5 4.5 L8.2 1" fill="none" stroke="#e8e8e8" stroke-width="1.45"/></svg><svg class="pin" style="left:515px;top:397.5px;z-index:219" width="14" height="10"><ellipse cx="5" cy="5" rx="4.10" ry="3.80" fill="#3c3d3c" stroke="none" stroke-width="0"/><path d="M9.3 3.3 L11.4 5 L9.3 6.7 Z" fill="#3c3d3c"/></svg><svg class="pin" style="left:515px;top:417.5px;z-index:219" width="14" height="10"><ellipse cx="5" cy="5" rx="4.10" ry="3.80" fill="#3c3d3c" stroke="none" stroke-width="0"/><path d="M9.3 3.3 L11.4 5 L9.3 6.7 Z" fill="#3c3d3c"/></svg><div class="t lbl" style="left:529.8px;top:397.73px;z-index:219">A</div><div class="t lbl" style="left:529.8px;top:417.73px;z-index:219">B</div><svg class="pin" style="left:548px;top:397.5px;z-index:219" width="14" height="10"><ellipse cx="5" cy="5" rx="4.10" ry="3.80" fill="#f2f2f2" stroke="none" stroke-width="0"/><path d="M9.3 3.3 L11.4 5 L9.3 6.7 Z" fill="#f2f2f2"/></svg><div class="node" style="left:510.1px;top:427.4px;width:225.2px;height:53.2px;z-index:120"></div><div class="nbody" style="left:510.1px;top:427.4px;width:225.2px;height:53.2px;z-index:120"></div><div class="hdr" style="left:510.1px;top:427.4px;width:225.2px;height:26.9px;background:linear-gradient(90deg,rgba(117,187,55,0.72) 0%,rgba(102,168,46,0.68) 50%,rgba(211,220,204,0.15) 92%,rgba(211,220,204,0.15) 100%);z-index:320"></div><div class="t title" style="left:518.3px;top:431.88px;z-index:520">Wind - Level 3 - Angle Rotation Axis Mask Scale</div><div class="t sub sub-green" style="left:518.3px;top:443.83px;z-index:520">Param (-0.444)</div><svg class="chev" style="left:723.3px;top:437.5px;z-index:520" width="9" height="6"><path d="M0.8 1 L4.5 4.5 L8.2 1" fill="none" stroke="#e8e8e8" stroke-width="1.45"/></svg><div class="t lbl" style="left:530.5px;top:464.83px;z-index:220">Default Value</div><div class="box" style="left:581px;top:461.2px;width:18.6px;height:13.6px;z-index:220">0.0</div><svg class="pin" style="left:717.6px;top:460.8px;z-index:220" width="14" height="10"><ellipse cx="5" cy="5" rx="4.10" ry="3.80" fill="#f2f2f2" stroke="none" stroke-width="0"/><path d="M9.3 3.3 L11.4 5 L9.3 6.7 Z" fill="#f2f2f2"/></svg><div class="node" style="left:510.1px;top:460.1px;width:219.6px;height:52.2px;z-index:121"></div><div class="nbody" style="left:510.1px;top:460.1px;width:219.6px;height:52.2px;z-index:121"></div><div class="hdr" style="left:510.1px;top:460.1px;width:219.6px;height:25.9px;background:linear-gradient(90deg,rgba(117,187,55,0.72) 0%,rgba(102,168,46,0.68) 50%,rgba(211,220,204,0.15) 92%,rgba(211,220,204,0.15) 100%);z-index:321"></div><div class="t title" style="left:518.3px;top:464.58px;z-index:521">Wind - Level 3 - Angle Rotation Axis Mask Bias</div><div class="t sub sub-green" style="left:518.3px;top:476.53px;z-index:521">Param (-1.25)</div><svg class="chev" style="left:717.7px;top:470px;z-index:521" width="9" height="6"><path d="M0.8 1 L4.5 4.5 L8.2 1" fill="none" stroke="#e8e8e8" stroke-width="1.45"/></svg><div class="t lbl" style="left:530.5px;top:497.03px;z-index:221">Default Value</div><div class="box" style="left:581px;top:493.4px;width:18.6px;height:13.6px;z-index:221">0.0</div><svg class="pin" style="left:712px;top:493px;z-index:221" width="14" height="10"><ellipse cx="5" cy="5" rx="4.10" ry="3.80" fill="#f2f2f2" stroke="none" stroke-width="0"/><path d="M9.3 3.3 L11.4 5 L9.3 6.7 Z" fill="#f2f2f2"/></svg><div class="node" style="left:510.1px;top:493.1px;width:212px;height:51.2px;z-index:122"></div><div class="nbody" style="left:510.1px;top:493.1px;width:212px;height:51.2px;z-index:122"></div><div class="hdr" style="left:510.1px;top:493.1px;width:212px;height:25.9px;background:linear-gradient(90deg,rgba(117,187,55,0.72) 0%,rgba(102,168,46,0.68) 50%,rgba(211,220,204,0.15) 92%,rgba(211,220,204,0.15) 100%);z-index:322"></div><div class="t title" style="left:518.3px;top:497.58px;z-index:522">Wind - Level 3 - Angle Rotation Falloff Radius</div><div class="t sub sub-green" style="left:518.3px;top:509.53px;z-index:522">Param (2)</div><svg class="chev" style="left:710.1px;top:502.5px;z-index:522" width="9" height="6"><path d="M0.8 1 L4.5 4.5 L8.2 1" fill="none" stroke="#e8e8e8" stroke-width="1.45"/></svg><div class="t lbl" style="left:530.5px;top:530.03px;z-index:222">Default Value</div><div class="box" style="left:581px;top:526.4px;width:18.6px;height:13.6px;z-index:222">2.0</div><svg class="pin" style="left:704.4px;top:526px;z-index:222" width="14" height="10"><ellipse cx="5" cy="5" rx="4.10" ry="3.80" fill="#f2f2f2" stroke="none" stroke-width="0"/><path d="M9.3 3.3 L11.4 5 L9.3 6.7 Z" fill="#f2f2f2"/></svg><div class="node" style="left:510.1px;top:557.7px;width:138.2px;height:52.2px;z-index:123"></div><div class="nbody" style="left:510.1px;top:557.7px;width:138.2px;height:52.2px;z-index:123"></div><div class="hdr" style="left:510.1px;top:557.7px;width:138.2px;height:25.9px;background:linear-gradient(90deg,rgba(117,187,55,0.72) 0%,rgba(102,168,46,0.68) 50%,rgba(211,220,204,0.15) 92%,rgba(211,220,204,0.15) 100%);z-index:323"></div><div class="t title" style="left:518.3px;top:562.18px;z-index:523">Wind - Level 3 - Axis Scale</div><div class="t sub sub-green" style="left:518.3px;top:574.13px;z-index:523">Param (0.25)</div><svg class="chev" style="left:636.3px;top:567.9px;z-index:523" width="9" height="6"><path d="M0.8 1 L4.5 4.5 L8.2 1" fill="none" stroke="#e8e8e8" stroke-width="1.45"/></svg><div class="t lbl" style="left:530.5px;top:594.63px;z-index:223">Default Value</div><div class="box" style="left:581px;top:591px;width:18.6px;height:13.6px;z-index:223">0.0</div><svg class="pin" style="left:630.6px;top:590.6px;z-index:223" width="14" height="10"><ellipse cx="5" cy="5" rx="4.10" ry="3.80" fill="#f2f2f2" stroke="none" stroke-width="0"/><path d="M9.3 3.3 L11.4 5 L9.3 6.7 Z" fill="#f2f2f2"/></svg><div class="node" style="left:510.1px;top:590.1px;width:166.2px;height:52.2px;z-index:124"></div><div class="nbody" style="left:510.1px;top:590.1px;width:166.2px;height:52.2px;z-index:124"></div><div class="hdr" style="left:510.1px;top:590.1px;width:166.2px;height:25.9px;background:linear-gradient(90deg,rgba(117,187,55,0.72) 0%,rgba(102,168,46,0.68) 50%,rgba(211,220,204,0.15) 92%,rgba(211,220,204,0.15) 100%);z-index:324"></div><div class="t title" style="left:518.3px;top:594.58px;z-index:524">Wind - Level 3 - Axis Speed Scale</div><div class="t sub sub-green" style="left:518.3px;top:606.53px;z-index:524">Param (10)</div><svg class="chev" style="left:664.3px;top:599.4px;z-index:524" width="9" height="6"><path d="M0.8 1 L4.5 4.5 L8.2 1" fill="none" stroke="#e8e8e8" stroke-width="1.45"/></svg><div class="t lbl" style="left:530.5px;top:627.03px;z-index:224">Default Value</div><div class="box" style="left:581px;top:623.4px;width:24px;height:13.6px;z-index:224">10.0</div><svg class="pin" style="left:658.6px;top:623px;z-index:224" width="14" height="10"><ellipse cx="5" cy="5" rx="4.10" ry="3.80" fill="#f2f2f2" stroke="none" stroke-width="0"/><path d="M9.3 3.3 L11.4 5 L9.3 6.7 Z" fill="#f2f2f2"/></svg><div class="node" style="left:715.1px;top:17.4px;width:77.2px;height:38.2px;z-index:125"></div><div class="nbody" style="left:715.1px;top:17.4px;width:77.2px;height:38.2px;z-index:125"></div><div class="hdr" style="left:715.1px;top:17.4px;width:77.2px;height:16.9px;background:linear-gradient(90deg,rgba(118,201,35,0.72) 0%,rgba(102,179,32,0.68) 50%,rgba(211,220,204,0.15) 92%,rgba(211,220,204,0.15) 100%);z-index:325"></div><div class="t title" style="left:723.5px;top:22.48px;z-index:525">Level4WPO</div><svg class="chev" style="left:779.8px;top:22.6px;z-index:525" width="9" height="6"><path d="M0.8 1 L4.5 4.5 L8.2 1" fill="none" stroke="#e8e8e8" stroke-width="1.45"/></svg><svg class="pin" style="left:774.6px;top:40.4px;z-index:225" width="14" height="10"><ellipse cx="5" cy="5" rx="4.10" ry="3.80" fill="#f2f2f2" stroke="none" stroke-width="0"/><path d="M9.3 3.3 L11.4 5 L9.3 6.7 Z" fill="#f2f2f2"/></svg><div class="node" style="left:683.1px;top:50.1px;width:86.7px;height:37.2px;z-index:126"></div><div class="nbody" style="left:683.1px;top:50.1px;width:86.7px;height:37.2px;z-index:126"></div><div class="hdr" style="left:683.1px;top:50.1px;width:86.7px;height:16.9px;background:linear-gradient(90deg,rgba(118,201,35,0.72) 0%,rgba(102,179,32,0.68) 50%,rgba(211,220,204,0.15) 92%,rgba(211,220,204,0.15) 100%);z-index:326"></div><div class="t title" style="left:691.5px;top:55.18px;z-index:526">Level2Normal</div><svg class="chev" style="left:757.3px;top:55.3px;z-index:526" width="9" height="6"><path d="M0.8 1 L4.5 4.5 L8.2 1" fill="none" stroke="#e8e8e8" stroke-width="1.45"/></svg><svg class="pin" style="left:752.1px;top:72.4px;z-index:226" width="14" height="10"><ellipse cx="5" cy="5" rx="4.10" ry="3.80" fill="#f2f2f2" stroke="none" stroke-width="0"/><path d="M9.3 3.3 L11.4 5 L9.3 6.7 Z" fill="#f2f2f2"/></svg><div class="node" style="left:683.1px;top:81.9px;width:96px;height:36.8px;z-index:127"></div><div class="nbody" style="left:683.1px;top:81.9px;width:96px;height:36.8px;z-index:127"></div><div class="hdr" style="left:683.1px;top:81.9px;width:96px;height:16.9px;background:linear-gradient(90deg,rgba(221,36,113,0.72) 0%,rgba(191,30,97,0.68) 50%,rgba(224,193,211,0.15) 92%,rgba(224,193,211,0.15) 100%);z-index:327"></div><div class="t title" style="left:691.5px;top:86.98px;z-index:527">Level3PivotUVs</div><svg class="chev" style="left:766.6px;top:87.1px;z-index:527" width="9" height="6"><path d="M0.8 1 L4.5 4.5 L8.2 1" fill="none" stroke="#e8e8e8" stroke-width="1.45"/></svg><svg class="pin" style="left:761.4px;top:105px;z-index:227" width="14" height="10"><ellipse cx="5" cy="5" rx="4.10" ry="3.80" fill="#f2f2f2" stroke="none" stroke-width="0"/><path d="M9.3 3.3 L11.4 5 L9.3 6.7 Z" fill="#f2f2f2"/></svg><div class="node" style="left:683.1px;top:115.3px;width:92.2px;height:60.2px;z-index:128"></div><div class="nbody" style="left:683.1px;top:115.3px;width:92.2px;height:60.2px;z-index:128"></div><div class="hdr" style="left:683.1px;top:115.3px;width:92.2px;height:25.9px;background:linear-gradient(90deg,rgba(221,26,27,0.72) 0%,rgba(191,23,24,0.68) 45%,rgba(251,186,198,0.15) 92%,rgba(251,186,198,0.15) 100%);z-index:328"></div><div class="t title" style="left:691.3px;top:119.78px;z-index:528">Texture Size</div><div class="t sub sub-texred" style="left:691.3px;top:131.73px;z-index:528">Texture Property</div><svg class="chev" style="left:763.5px;top:124.3px;z-index:528" width="9" height="6"><path d="M0.8 1 L4.5 4.5 L8.2 1" fill="none" stroke="#e8e8e8" stroke-width="1.45"/></svg><svg class="pin" style="left:687.4px;top:147.5px;z-index:228" width="14" height="10"><ellipse cx="5" cy="5" rx="4.10" ry="3.80" fill="#3c3d3c" stroke="none" stroke-width="0"/><path d="M9.3 3.3 L11.4 5 L9.3 6.7 Z" fill="#3c3d3c"/></svg><div class="t lbl" style="left:703px;top:148.63px;z-index:228">Tex</div><svg class="pin" style="left:757.3px;top:147.5px;z-index:228" width="14" height="10"><ellipse cx="5" cy="5" rx="4.10" ry="3.80" fill="#f2f2f2" stroke="none" stroke-width="0"/><path d="M9.3 3.3 L11.4 5 L9.3 6.7 Z" fill="#f2f2f2"/></svg><svg class="chev" style="left:725.1px;top:166.3px;z-index:228" width="9" height="6"><path d="M0.8 1 L4.5 4.5 L8.2 1" fill="none" stroke="#e8e8e8" stroke-width="1.45"/></svg><div class="node" style="left:683.1px;top:189.8px;width:80.7px;height:37.5px;z-index:129"></div><div class="nbody" style="left:683.1px;top:189.8px;width:80.7px;height:37.5px;z-index:129"></div><div class="hdr" style="left:683.1px;top:189.8px;width:80.7px;height:16.9px;background:linear-gradient(90deg,rgba(221,36,113,0.72) 0%,rgba(191,30,97,0.68) 50%,rgba(224,193,211,0.15) 92%,rgba(224,193,211,0.15) 100%);z-index:329"></div><div class="t title" style="left:691.5px;top:194.88px;z-index:529">Level3Mask</div><svg class="chev" style="left:751.3px;top:195px;z-index:529" width="9" height="6"><path d="M0.8 1 L4.5 4.5 L8.2 1" fill="none" stroke="#e8e8e8" stroke-width="1.45"/></svg><svg class="pin" style="left:746.1px;top:213.3px;z-index:229" width="14" height="10"><ellipse cx="5" cy="5" rx="4.10" ry="3.80" fill="#f2f2f2" stroke="none" stroke-width="0"/><path d="M9.3 3.3 L11.4 5 L9.3 6.7 Z" fill="#f2f2f2"/></svg><div class="node" style="left:683.1px;top:236.8px;width:62.6px;height:57.5px;z-index:130"></div><div class="nbody" style="left:683.1px;top:236.8px;width:62.6px;height:57.5px;z-index:130"></div><div class="hdr" style="left:683.1px;top:236.8px;width:62.6px;height:16.9px;background:linear-gradient(90deg,rgba(106,152,106,0.72) 0%,rgba(94,140,94,0.68) 45%,rgba(211,220,211,0.15) 92%,rgba(211,220,211,0.15) 100%);z-index:330"></div><div class="t title" style="left:692px;top:241.88px;z-index:530">Multiply</div><svg class="chev" style="left:733.1px;top:241.9px;z-index:530" width="9" height="6"><path d="M0.8 1 L4.5 4.5 L8.2 1" fill="none" stroke="#e8e8e8" stroke-width="1.45"/></svg><svg class="pin" style="left:688px;top:259.7px;z-index:230" width="14" height="10"><ellipse cx="5" cy="5" rx="4.10" ry="3.80" fill="#3c3d3c" stroke="none" stroke-width="0"/><path d="M9.3 3.3 L11.4 5 L9.3 6.7 Z" fill="#3c3d3c"/></svg><svg class="pin" style="left:688px;top:279.7px;z-index:230" width="14" height="10"><ellipse cx="5" cy="5" rx="4.10" ry="3.80" fill="#3c3d3c" stroke="none" stroke-width="0"/><path d="M9.3 3.3 L11.4 5 L9.3 6.7 Z" fill="#3c3d3c"/></svg><div class="t lbl" style="left:702.8px;top:259.93px;z-index:230">A</div><div class="t lbl" style="left:702.8px;top:279.93px;z-index:230">B</div><svg class="pin" style="left:728.4px;top:259.7px;z-index:230" width="14" height="10"><ellipse cx="5" cy="5" rx="4.10" ry="3.80" fill="#f2f2f2" stroke="none" stroke-width="0"/><path d="M9.3 3.3 L11.4 5 L9.3 6.7 Z" fill="#f2f2f2"/></svg><div class="node" style="left:1125.6px;top:45.6px;width:78.1px;height:37.2px;z-index:131"></div><div class="nbody" style="left:1125.6px;top:45.6px;width:78.1px;height:37.2px;z-index:131"></div><div class="hdr" style="left:1125.6px;top:45.6px;width:78.1px;height:16.9px;background:linear-gradient(90deg,rgba(118,201,35,0.72) 0%,rgba(102,179,32,0.68) 50%,rgba(211,220,204,0.15) 92%,rgba(211,220,204,0.15) 100%);z-index:331"></div><div class="t title" style="left:1134px;top:50.68px;z-index:531">Level3WPO</div><svg class="chev" style="left:1191.2px;top:50.8px;z-index:531" width="9" height="6"><path d="M0.8 1 L4.5 4.5 L8.2 1" fill="none" stroke="#e8e8e8" stroke-width="1.45"/></svg><svg class="pin" style="left:1131px;top:68.3px;z-index:231" width="14" height="10"><ellipse cx="5" cy="5" rx="4.10" ry="3.80" fill="#f2f2f2" stroke="none" stroke-width="0"/><path d="M9.3 3.3 L11.4 5 L9.3 6.7 Z" fill="#f2f2f2"/></svg><svg class="pin" style="left:1185.6px;top:68.3px;z-index:231" width="14" height="10"><ellipse cx="5" cy="5" rx="3.30" ry="3.00" fill="#1c1c1c" stroke="#f0f0f0" stroke-width="1.6"/><path d="M9.3 3.3 L11.4 5 L9.3 6.7 Z" fill="#f0f0f0"/></svg><div class="node" style="left:1125.6px;top:75.5px;width:87.3px;height:37.8px;z-index:132"></div><div class="nbody" style="left:1125.6px;top:75.5px;width:87.3px;height:37.8px;z-index:132"></div><div class="hdr" style="left:1125.6px;top:75.5px;width:87.3px;height:16.9px;background:linear-gradient(90deg,rgba(118,201,35,0.72) 0%,rgba(102,179,32,0.68) 50%,rgba(211,220,204,0.15) 92%,rgba(211,220,204,0.15) 100%);z-index:332"></div><div class="t title" style="left:1134px;top:80.58px;z-index:532">Level3Normal</div><svg class="chev" style="left:1200.4px;top:80.7px;z-index:532" width="9" height="6"><path d="M0.8 1 L4.5 4.5 L8.2 1" fill="none" stroke="#e8e8e8" stroke-width="1.45"/></svg><svg class="pin" style="left:1131px;top:98.6px;z-index:232" width="14" height="10"><ellipse cx="5" cy="5" rx="4.10" ry="3.80" fill="#f2f2f2" stroke="none" stroke-width="0"/><path d="M9.3 3.3 L11.4 5 L9.3 6.7 Z" fill="#f2f2f2"/></svg><svg class="pin" style="left:1194.8px;top:98.6px;z-index:232" width="14" height="10"><ellipse cx="5" cy="5" rx="3.30" ry="3.00" fill="#1c1c1c" stroke="#f0f0f0" stroke-width="1.6"/><path d="M9.3 3.3 L11.4 5 L9.3 6.7 Z" fill="#f0f0f0"/></svg><div class="node" style="left:1125.6px;top:189.3px;width:115.2px;height:37.2px;z-index:133"></div><div class="nbody" style="left:1125.6px;top:189.3px;width:115.2px;height:37.2px;z-index:133"></div><div class="hdr" style="left:1125.6px;top:189.3px;width:115.2px;height:16.9px;background:linear-gradient(90deg,rgba(202,37,194,0.72) 0%,rgba(181,32,171,0.68) 52%,rgba(224,200,224,0.15) 92%,rgba(224,200,224,0.15) 100%);z-index:333"></div><div class="t title" style="left:1134px;top:194.38px;z-index:533">Level3RotationAngle</div><svg class="chev" style="left:1228.3px;top:194.5px;z-index:533" width="9" height="6"><path d="M0.8 1 L4.5 4.5 L8.2 1" fill="none" stroke="#e8e8e8" stroke-width="1.45"/></svg><svg class="pin" style="left:1131px;top:212px;z-index:233" width="14" height="10"><ellipse cx="5" cy="5" rx="4.10" ry="3.80" fill="#f2f2f2" stroke="none" stroke-width="0"/><path d="M9.3 3.3 L11.4 5 L9.3 6.7 Z" fill="#f2f2f2"/></svg><svg class="pin" style="left:1222.7px;top:212px;z-index:233" width="14" height="10"><ellipse cx="5" cy="5" rx="3.30" ry="3.00" fill="#1c1c1c" stroke="#f0f0f0" stroke-width="1.6"/><path d="M9.3 3.3 L11.4 5 L9.3 6.7 Z" fill="#f0f0f0"/></svg><div class="node" style="left:844.4px;top:38.7px;width:234px;height:571.8px;z-index:134"></div><div class="nbody" style="left:844.4px;top:38.7px;width:234px;height:571.8px;z-index:134"></div><div class="hdr" style="left:844.4px;top:38.7px;width:234px;height:16.3px;background:linear-gradient(90deg,rgba(91,146,192,0.72) 0%,rgba(78,130,174,0.68) 45%,rgba(224,253,255,0.15) 92%,rgba(224,253,255,0.15) 100%);z-index:334"></div><div class="t title" style="left:853.3px;top:43.78px;z-index:534">MF_Ghis_PivotPainter2_Animation_SingleLevel</div><svg class="pin" style="left:849.6px;top:60.6px;z-index:234" width="14" height="10"><ellipse cx="5" cy="5" rx="4.10" ry="3.80" fill="#f2f2f2" stroke="none" stroke-width="0"/><path d="M9.3 3.3 L11.4 5 L9.3 6.7 Z" fill="#f2f2f2"/></svg><div class="t lbl" style="left:865px;top:61.63px;z-index:234;font-size:8.12px">Previous WPO (V3)</div><svg class="pin" style="left:849.6px;top:80.42px;z-index:234" width="14" height="10"><ellipse cx="5" cy="5" rx="4.10" ry="3.80" fill="#3c3d3c" stroke="none" stroke-width="0"/><path d="M9.3 3.3 L11.4 5 L9.3 6.7 Z" fill="#3c3d3c"/></svg><div class="t lbl" style="left:865px;top:81.45px;z-index:234;font-size:8.12px">Global - Enable (SB)</div><svg class="pin" style="left:849.6px;top:100.24px;z-index:234" width="14" height="10"><ellipse cx="5" cy="5" rx="4.10" ry="3.80" fill="#3c3d3c" stroke="none" stroke-width="0"/><path d="M9.3 3.3 L11.4 5 L9.3 6.7 Z" fill="#3c3d3c"/></svg><div class="t lbl" style="left:865px;top:101.27px;z-index:234;font-size:8.12px">Global - Enable Normal (SB)</div><svg class="pin" style="left:849.6px;top:120.06px;z-index:234" width="14" height="10"><ellipse cx="5" cy="5" rx="4.10" ry="3.80" fill="#3c3d3c" stroke="none" stroke-width="0"/><path d="M9.3 3.3 L11.4 5 L9.3 6.7 Z" fill="#3c3d3c"/></svg><div class="t lbl" style="left:865px;top:121.09px;z-index:234;font-size:8.12px">Global - Normal (V3)</div><svg class="pin" style="left:849.6px;top:139.88px;z-index:234" width="14" height="10"><ellipse cx="5" cy="5" rx="3.40" ry="3.10" fill="#101010" stroke="#3c3c3c" stroke-width="1.4"/><path d="M9.3 3.3 L11.4 5 L9.3 6.7 Z" fill="#3c3c3c"/></svg><div class="t lbl" style="left:865px;top:140.91px;z-index:234;font-size:8.12px"><span style="letter-spacing:1.15px">-------</span> (S)</div><svg class="pin" style="left:849.6px;top:159.7px;z-index:234" width="14" height="10"><ellipse cx="5" cy="5" rx="4.10" ry="3.80" fill="#3c3d3c" stroke="none" stroke-width="0"/><path d="M9.3 3.3 L11.4 5 L9.3 6.7 Z" fill="#3c3d3c"/></svg><div class="t lbl" style="left:865px;top:160.73px;z-index:234;font-size:8.12px">Global - Data Tex UV (V2)</div><svg class="pin" style="left:849.6px;top:179.52px;z-index:234" width="14" height="10"><ellipse cx="5" cy="5" rx="4.10" ry="3.80" fill="#3c3d3c" stroke="none" stroke-width="0"/><path d="M9.3 3.3 L11.4 5 L9.3 6.7 Z" fill="#3c3d3c"/></svg><div class="t lbl" style="left:865px;top:180.55px;z-index:234;font-size:8.12px">Global - Data Tex Size (V2)</div><svg class="pin" style="left:849.6px;top:199.34px;z-index:234" width="14" height="10"><ellipse cx="5" cy="5" rx="4.10" ry="3.80" fill="#3c3d3c" stroke="none" stroke-width="0"/><path d="M9.3 3.3 L11.4 5 L9.3 6.7 Z" fill="#3c3d3c"/></svg><div class="t lbl" style="left:865px;top:200.37px;z-index:234;font-size:8.12px">Global - Pos &amp; ID Tex (T2d)</div><svg class="pin" style="left:849.6px;top:219.16px;z-index:234" width="14" height="10"><ellipse cx="5" cy="5" rx="4.10" ry="3.80" fill="#3c3d3c" stroke="none" stroke-width="0"/><path d="M9.3 3.3 L11.4 5 L9.3 6.7 Z" fill="#3c3d3c"/></svg><div class="t lbl" style="left:865px;top:220.19px;z-index:234;font-size:8.12px">Global - XVec &amp; XExtent Tex (T2d)</div><svg class="pin" style="left:849.6px;top:238.98px;z-index:234" width="14" height="10"><ellipse cx="5" cy="5" rx="3.40" ry="3.10" fill="#101010" stroke="#3c3c3c" stroke-width="1.4"/><path d="M9.3 3.3 L11.4 5 L9.3 6.7 Z" fill="#3c3c3c"/></svg><div class="t lbl" style="left:865px;top:240.01px;z-index:234;font-size:8.12px">Global - Turb &amp; Mag Tex (T2d)</div><svg class="pin" style="left:849.6px;top:258.8px;z-index:234" width="14" height="10"><ellipse cx="5" cy="5" rx="3.40" ry="3.10" fill="#101010" stroke="#3c3c3c" stroke-width="1.4"/><path d="M9.3 3.3 L11.4 5 L9.3 6.7 Z" fill="#3c3c3c"/></svg><div class="t lbl" style="left:865px;top:259.83px;z-index:234;font-size:8.12px"><span style="letter-spacing:1.15px">--------</span> (S)</div><svg class="pin" style="left:849.6px;top:278.62px;z-index:234" width="14" height="10"><ellipse cx="5" cy="5" rx="4.10" ry="3.80" fill="#3c3d3c" stroke="none" stroke-width="0"/><path d="M9.3 3.3 L11.4 5 L9.3 6.7 Z" fill="#3c3d3c"/></svg><div class="t lbl" style="left:865px;top:279.65px;z-index:234;font-size:8.12px">Global - Layer Mask (S)</div><svg class="pin" style="left:849.6px;top:298.44px;z-index:234" width="14" height="10"><ellipse cx="5" cy="5" rx="3.40" ry="3.10" fill="#101010" stroke="#3c3c3c" stroke-width="1.4"/><path d="M9.3 3.3 L11.4 5 L9.3 6.7 Z" fill="#3c3c3c"/></svg><div class="t lbl" style="left:865px;top:299.47px;z-index:234;font-size:8.12px">Global - Scale (S)</div><svg class="pin" style="left:849.6px;top:318.26px;z-index:234" width="14" height="10"><ellipse cx="5" cy="5" rx="4.10" ry="3.80" fill="#3c3d3c" stroke="none" stroke-width="0"/><path d="M9.3 3.3 L11.4 5 L9.3 6.7 Z" fill="#3c3d3c"/></svg><div class="t lbl" style="left:865px;top:319.29px;z-index:234;font-size:8.12px">Global - Speed X (S)</div><svg class="pin" style="left:849.6px;top:338.08px;z-index:234" width="14" height="10"><ellipse cx="5" cy="5" rx="3.40" ry="3.10" fill="#101010" stroke="#3c3c3c" stroke-width="1.4"/><path d="M9.3 3.3 L11.4 5 L9.3 6.7 Z" fill="#3c3c3c"/></svg><div class="t lbl" style="left:865px;top:339.11px;z-index:234;font-size:8.12px">Global - Axis X (V3)</div><svg class="pin" style="left:849.6px;top:357.9px;z-index:234" width="14" height="10"><ellipse cx="5" cy="5" rx="3.40" ry="3.10" fill="#101010" stroke="#3c3c3c" stroke-width="1.4"/><path d="M9.3 3.3 L11.4 5 L9.3 6.7 Z" fill="#3c3c3c"/></svg><div class="t lbl" style="left:865px;top:358.93px;z-index:234;font-size:8.12px">Global - Speed Y (S)</div><svg class="pin" style="left:849.6px;top:377.72px;z-index:234" width="14" height="10"><ellipse cx="5" cy="5" rx="3.40" ry="3.10" fill="#101010" stroke="#3c3c3c" stroke-width="1.4"/><path d="M9.3 3.3 L11.4 5 L9.3 6.7 Z" fill="#3c3c3c"/></svg><div class="t lbl" style="left:865px;top:378.75px;z-index:234;font-size:8.12px">Global - Axis Y (V3)</div><svg class="pin" style="left:849.6px;top:397.54px;z-index:234" width="14" height="10"><ellipse cx="5" cy="5" rx="3.40" ry="3.10" fill="#101010" stroke="#3c3c3c" stroke-width="1.4"/><path d="M9.3 3.3 L11.4 5 L9.3 6.7 Z" fill="#3c3c3c"/></svg><div class="t lbl" style="left:865px;top:398.57px;z-index:234;font-size:8.12px"><span style="letter-spacing:1.15px">---------</span> (S)</div><svg class="pin" style="left:849.6px;top:417.36px;z-index:234" width="14" height="10"><ellipse cx="5" cy="5" rx="4.10" ry="3.80" fill="#3c3d3c" stroke="none" stroke-width="0"/><path d="M9.3 3.3 L11.4 5 L9.3 6.7 Z" fill="#3c3d3c"/></svg><div class="t lbl" style="left:865px;top:418.39px;z-index:234;font-size:8.12px">Angle - Rotation (S)</div><svg class="pin" style="left:849.6px;top:437.18px;z-index:234" width="14" height="10"><ellipse cx="5" cy="5" rx="4.10" ry="3.80" fill="#3c3d3c" stroke="none" stroke-width="0"/><path d="M9.3 3.3 L11.4 5 L9.3 6.7 Z" fill="#3c3d3c"/></svg><div class="t lbl" style="left:865px;top:438.21px;z-index:234;font-size:8.12px">Angle - Rotation Offset (S)</div><svg class="pin" style="left:849.6px;top:457px;z-index:234" width="14" height="10"><ellipse cx="5" cy="5" rx="4.10" ry="3.80" fill="#3c3d3c" stroke="none" stroke-width="0"/><path d="M9.3 3.3 L11.4 5 L9.3 6.7 Z" fill="#3c3d3c"/></svg><div class="t lbl" style="left:865px;top:458.03px;z-index:234;font-size:8.12px">Angle - Parent Rotation (S)</div><svg class="pin" style="left:849.6px;top:476.82px;z-index:234" width="14" height="10"><ellipse cx="5" cy="5" rx="3.40" ry="3.10" fill="#101010" stroke="#3c3c3c" stroke-width="1.4"/><path d="M9.3 3.3 L11.4 5 L9.3 6.7 Z" fill="#3c3c3c"/></svg><div class="t lbl" style="left:865px;top:477.85px;z-index:234;font-size:8.12px">Angle - Use Rotation Axis Mask (SB)</div><svg class="pin" style="left:849.6px;top:496.64px;z-index:234" width="14" height="10"><ellipse cx="5" cy="5" rx="4.10" ry="3.80" fill="#3c3d3c" stroke="none" stroke-width="0"/><path d="M9.3 3.3 L11.4 5 L9.3 6.7 Z" fill="#3c3d3c"/></svg><div class="t lbl" style="left:865px;top:497.67px;z-index:234;font-size:8.12px">Angle - Rotation Axis Mask Scale (S)</div><svg class="pin" style="left:849.6px;top:516.46px;z-index:234" width="14" height="10"><ellipse cx="5" cy="5" rx="4.10" ry="3.80" fill="#3c3d3c" stroke="none" stroke-width="0"/><path d="M9.3 3.3 L11.4 5 L9.3 6.7 Z" fill="#3c3d3c"/></svg><div class="t lbl" style="left:865px;top:517.49px;z-index:234;font-size:8.12px">Angle - Rotation Axis Mask Bias (S)</div><svg class="pin" style="left:849.6px;top:536.28px;z-index:234" width="14" height="10"><ellipse cx="5" cy="5" rx="4.10" ry="3.80" fill="#3c3d3c" stroke="none" stroke-width="0"/><path d="M9.3 3.3 L11.4 5 L9.3 6.7 Z" fill="#3c3d3c"/></svg><div class="t lbl" style="left:865px;top:537.31px;z-index:234;font-size:8.12px">Angle - Rotation Falloff Radius (S)</div><svg class="pin" style="left:849.6px;top:556.1px;z-index:234" width="14" height="10"><ellipse cx="5" cy="5" rx="3.40" ry="3.10" fill="#101010" stroke="#3c3c3c" stroke-width="1.4"/><path d="M9.3 3.3 L11.4 5 L9.3 6.7 Z" fill="#3c3c3c"/></svg><div class="t lbl" style="left:865px;top:557.13px;z-index:234;font-size:8.12px"><span style="letter-spacing:1.15px">----------</span> (S)</div><svg class="pin" style="left:849.6px;top:575.92px;z-index:234" width="14" height="10"><ellipse cx="5" cy="5" rx="4.10" ry="3.80" fill="#3c3d3c" stroke="none" stroke-width="0"/><path d="M9.3 3.3 L11.4 5 L9.3 6.7 Z" fill="#3c3d3c"/></svg><div class="t lbl" style="left:865px;top:576.95px;z-index:234;font-size:8.12px">Axis - Scale (S)</div><svg class="pin" style="left:849.6px;top:595.74px;z-index:234" width="14" height="10"><ellipse cx="5" cy="5" rx="4.10" ry="3.80" fill="#3c3d3c" stroke="none" stroke-width="0"/><path d="M9.3 3.3 L11.4 5 L9.3 6.7 Z" fill="#3c3d3c"/></svg><div class="t lbl" style="left:865px;top:596.77px;z-index:234;font-size:8.12px">Axis - Speed Scale (S)</div><svg class="pin" style="left:1060.6px;top:60.6px;z-index:234" width="14" height="10"><ellipse cx="5" cy="5" rx="3.30" ry="3.00" fill="#1c1c1c" stroke="#f0f0f0" stroke-width="1.6"/><path d="M9.3 3.3 L11.4 5 L9.3 6.7 Z" fill="#f0f0f0"/></svg><div class="t lbl" style="right:207.2px;top:61.73px;z-index:234">WP</div><svg class="pin" style="left:1060.6px;top:80.42px;z-index:234" width="14" height="10"><ellipse cx="5" cy="5" rx="4.10" ry="3.80" fill="#f2f2f2" stroke="none" stroke-width="0"/><path d="M9.3 3.3 L11.4 5 L9.3 6.7 Z" fill="#f2f2f2"/></svg><div class="t lbl" style="right:207.2px;top:81.55px;z-index:234">WPO</div><svg class="pin" style="left:1060.6px;top:100.24px;z-index:234" width="14" height="10"><ellipse cx="5" cy="5" rx="4.10" ry="3.80" fill="#f2f2f2" stroke="none" stroke-width="0"/><path d="M9.3 3.3 L11.4 5 L9.3 6.7 Z" fill="#f2f2f2"/></svg><div class="t lbl" style="right:207.2px;top:101.37px;z-index:234">Normal</div><svg class="pin" style="left:1060.6px;top:120.06px;z-index:234" width="14" height="10"><ellipse cx="5" cy="5" rx="3.30" ry="3.00" fill="#1c1c1c" stroke="#f0f0f0" stroke-width="1.6"/><path d="M9.3 3.3 L11.4 5 L9.3 6.7 Z" fill="#f0f0f0"/></svg><div class="t lbl" style="right:207.2px;top:121.19px;z-index:234"><span style="letter-spacing:1.15px;margin-right:-1.15px">----</span></div><svg class="pin" style="left:1060.6px;top:139.88px;z-index:234" width="14" height="10"><ellipse cx="5" cy="5" rx="3.30" ry="3.00" fill="#1c1c1c" stroke="#f0f0f0" stroke-width="1.6"/><path d="M9.3 3.3 L11.4 5 L9.3 6.7 Z" fill="#f0f0f0"/></svg><div class="t lbl" style="right:207.2px;top:141.01px;z-index:234">Parent Index</div><svg class="pin" style="left:1060.6px;top:159.7px;z-index:234" width="14" height="10"><ellipse cx="5" cy="5" rx="3.30" ry="3.00" fill="#1c1c1c" stroke="#f0f0f0" stroke-width="1.6"/><path d="M9.3 3.3 L11.4 5 L9.3 6.7 Z" fill="#f0f0f0"/></svg><div class="t lbl" style="right:207.2px;top:160.83px;z-index:234">Parent UVs</div><svg class="pin" style="left:1060.6px;top:179.52px;z-index:234" width="14" height="10"><ellipse cx="5" cy="5" rx="3.30" ry="3.00" fill="#1c1c1c" stroke="#f0f0f0" stroke-width="1.6"/><path d="M9.3 3.3 L11.4 5 L9.3 6.7 Z" fill="#f0f0f0"/></svg><div class="t lbl" style="right:207.2px;top:180.65px;z-index:234"><span style="letter-spacing:1.15px;margin-right:-1.15px">-----</span></div><svg class="pin" style="left:1060.6px;top:199.34px;z-index:234" width="14" height="10"><ellipse cx="5" cy="5" rx="3.30" ry="3.00" fill="#1c1c1c" stroke="#f0f0f0" stroke-width="1.6"/><path d="M9.3 3.3 L11.4 5 L9.3 6.7 Z" fill="#f0f0f0"/></svg><div class="t lbl" style="right:207.2px;top:200.47px;z-index:234">Rotation Mask</div><svg class="pin" style="left:1060.6px;top:219.16px;z-index:234" width="14" height="10"><ellipse cx="5" cy="5" rx="4.10" ry="3.80" fill="#f2f2f2" stroke="none" stroke-width="0"/><path d="M9.3 3.3 L11.4 5 L9.3 6.7 Z" fill="#f2f2f2"/></svg><div class="t lbl" style="right:207.2px;top:220.29px;z-index:234">Rotation Angle</div>
<div id="botbar"></div><div id="vl"></div><div id="vb"></div><div id="rstrip"></div>
</div></body></html>
